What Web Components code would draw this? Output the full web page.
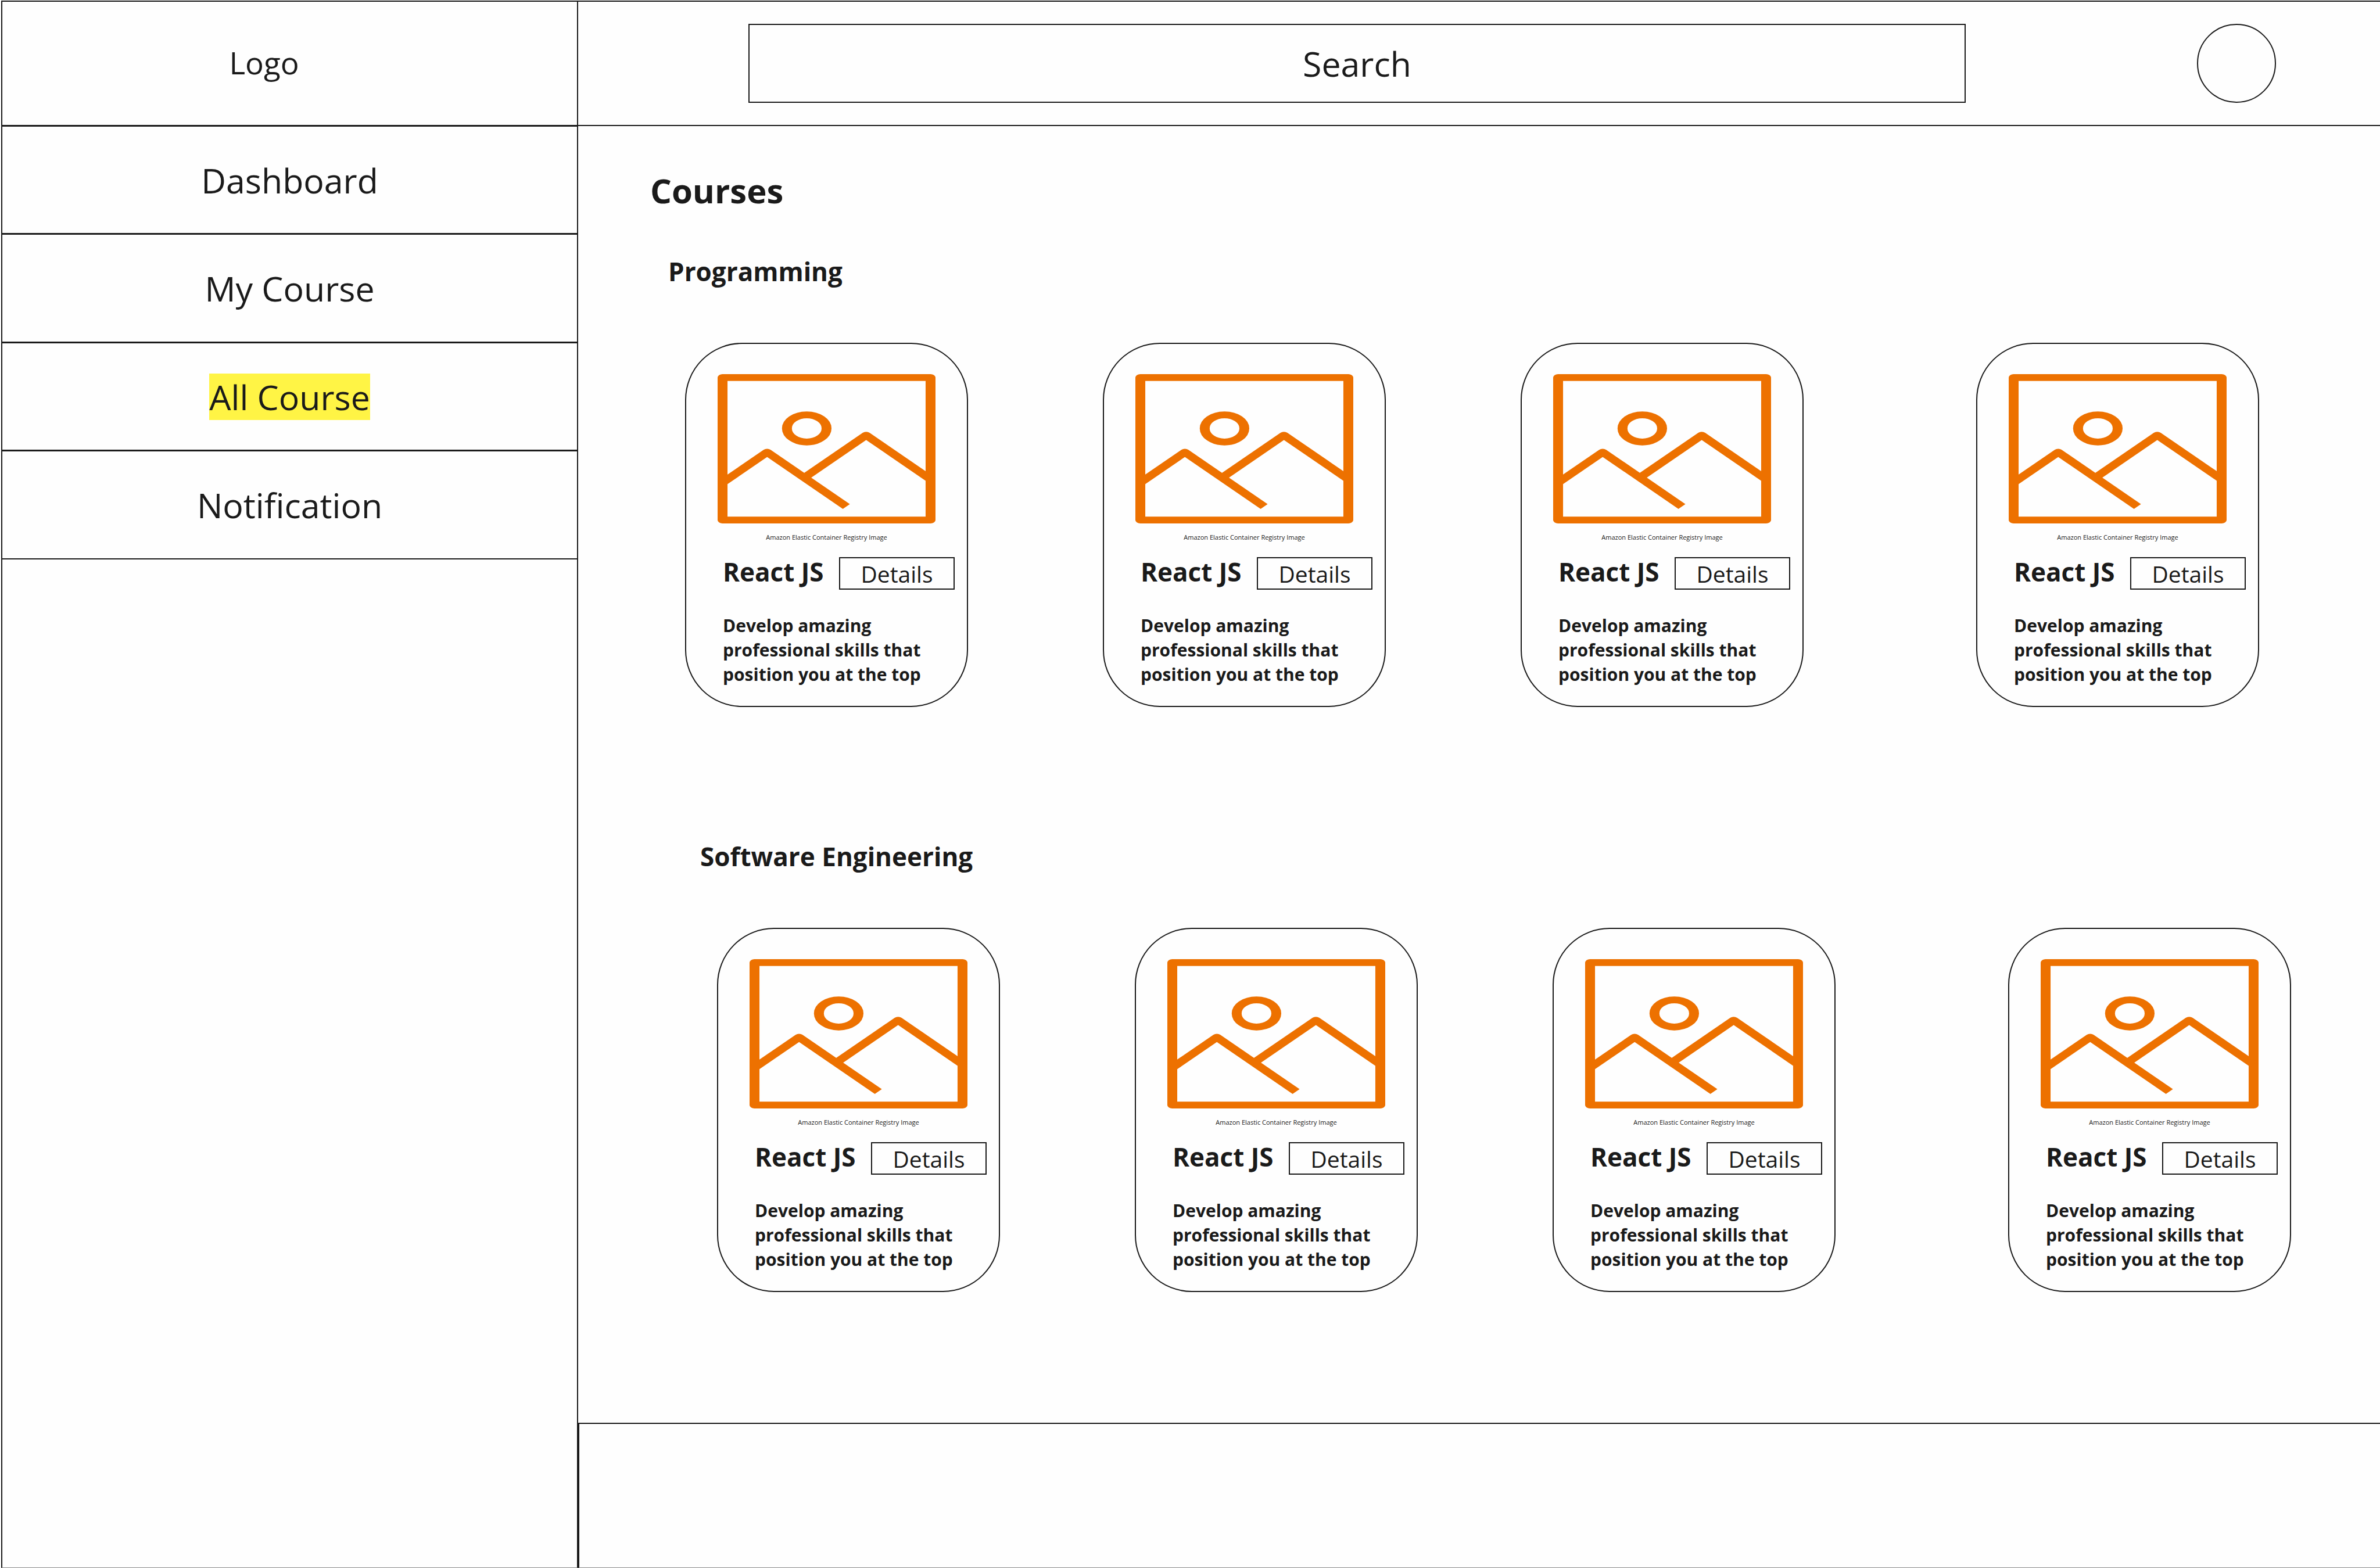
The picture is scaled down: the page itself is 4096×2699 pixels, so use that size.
<!DOCTYPE html>
<html lang="en">
<head>
<meta charset="utf-8">
<title>Courses</title>
<style>
  html { background: #fefefe; }
  body {
    margin: 0;
    font-family: "Open Sans", "Noto Sans", sans-serif;
    color: #1a1a1a;
    --line: #1a1a1a;
    --edge: #8a8a8a;
  }
</style>
</head>
<body>
<app-shell>
  <side-bar slot="side">
    <span slot="logo">Logo</span>
    <nav-item href="#dashboard">Dashboard</nav-item>
    <nav-item href="#my-course">My Course</nav-item>
    <nav-item href="#all-course" active>All Course</nav-item>
    <nav-item href="#notification">Notification</nav-item>
  </side-bar>
  <top-bar slot="top"></top-bar>
  <page-content>
    <span slot="title">Courses</span>
    <course-section>
      <span slot="title">Programming</span>
      <course-card></course-card>
      <course-card></course-card>
      <course-card></course-card>
      <course-card></course-card>
    </course-section>
    <course-section shifted>
      <span slot="title">Software Engineering</span>
      <course-card></course-card>
      <course-card></course-card>
      <course-card></course-card>
      <course-card></course-card>
    </course-section>
  </page-content>
  <page-footer slot="footer"></page-footer>
</app-shell>

<script>
  const define = (name, html) => {
    const template = document.createElement('template');
    template.innerHTML = '<style>*{box-sizing:border-box}:host{display:block;box-sizing:border-box}</style>' + html;
    customElements.define(name, class extends HTMLElement {
      constructor() {
        super();
        this.attachShadow({ mode: 'open' }).append(template.content.cloneNode(true));
      }
      connectedCallback() {
        const link = this.shadowRoot.querySelector('a');
        if (link) {
          link.href = this.getAttribute('href');
          if (this.hasAttribute('active')) link.setAttribute('aria-current', 'page');
        }
      }
    });
  };

  define('app-shell', `
    <style>
      :host { display: grid; grid-template-columns: 993px 1fr; min-height: 100vh; padding: 1px 0 0 2px; }
      .main { display: flex; flex-direction: column; min-width: 0; }
      main { flex: 1; }
    </style>
    <slot name="side"></slot>
    <div class="main">
      <slot name="top"></slot>
      <main><slot></slot></main>
      <slot name="footer"></slot>
    </div>`);

  define('side-bar', `
    <style>
      :host { border: 2px solid var(--line); border-bottom: 1px solid var(--edge); }
      .logo {
        display: flex; align-items: center; justify-content: center;
        height: 215px; padding: 0 88px 2px 0;
        border-bottom: 3px solid var(--line);
        font-size: 53px; line-height: 72px;
      }
      nav { display: grid; grid-auto-rows: 1fr; height: 745px; }
    </style>
    <div class="logo"><slot name="logo"></slot></div>
    <nav><slot></slot></nav>`);

  define('nav-item', `
    <style>
      :host { border-bottom: 3px solid var(--line); }
      :host(:last-child) { border-bottom-width: 2px; }
      a {
        display: flex; align-items: center; justify-content: center; height: 100%; padding-top: 1px;
        color: inherit; text-decoration: none; font-size: 59px; line-height: 80px;
      }
      :host([active]) span { background: #fff445; }
    </style>
    <a><span><slot></slot></span></a>`);

  define('top-bar', `
    <style>
      header {
        display: flex; align-items: center; gap: 398px;
        height: 216px; padding: 0 179px 0 293px;
        border: solid var(--line); border-width: 2px 0;
      }
      input {
        flex: 1; min-width: 0; height: 136px; padding: 0; border: 2px solid var(--line); border-radius: 0;
        background: none; outline: none; color: inherit;
        font: inherit; font-size: 59px; line-height: 80px; text-align: center;
      }
      input::placeholder { color: inherit; opacity: 1; }
      button {
        flex: none; width: 136px; height: 136px; padding: 0;
        border: 2px solid var(--line); border-radius: 50%; background: none;
      }
    </style>
    <header>
      <input type="text" aria-label="Search" placeholder="Search">
      <button type="button" aria-label="Profile"></button>
    </header>`);

  define('page-content', `
    <style>
      :host { padding: 71px 0 0 124px; }
      h1 { margin: 0; font-size: 58px; line-height: 80px; font-weight: 700; }
      .sections { display: grid; gap: 227px; padding-top: 69px; }
    </style>
    <h1><slot name="title"></slot></h1>
    <div class="sections"><slot></slot></div>`);

  define('course-section', `
    <style>
      :host { padding: 0 208px 0 31px; }
      :host([shifted]) { padding: 0 153px 0 86px; }
      h2 { margin: 0 0 93px; font-size: 44px; line-height: 60px; font-weight: 700; }
      .cards { display: grid; grid-template-columns: 719fr 719fr 784fr 487px; padding-left: 29px; }
    </style>
    <h2><slot name="title"></slot></h2>
    <div class="cards"><slot></slot></div>`);

  define('course-card', `
    <style>
      :host {
        width: 487px; height: 627px; padding-top: 52px;
        border: 2px solid var(--line); border-radius: 98px;
      }
      figure { margin: 0 54px; text-align: center; }
      svg { display: block; width: 375px; height: 257px; }
      figcaption { margin-top: 16px; font-size: 11px; line-height: 16px; }
      .row { display: flex; justify-content: space-between; align-items: flex-start; margin-top: 26px; padding: 0 21px 0 63px; }
      h3 { margin: 0; font-size: 44px; line-height: 50px; font-weight: 700; white-space: nowrap; }
      button {
        width: 199px; height: 56px; padding: 2px 0 0; border: 2px solid var(--line); background: none;
        color: inherit; font: inherit; font-size: 39px; line-height: 50px;
      }
      p { margin: 41px 0 0; padding: 0 56px 0 63px; font-size: 30px; line-height: 42px; font-weight: 700; }
    </style>
    <figure>
      <svg viewBox="0 0 44 44" preserveAspectRatio="none" fill="none" stroke="#ed7100" stroke-width="2" stroke-linejoin="round" aria-hidden="true">
        <rect x="1" y="1" width="42" height="42"/>
        <circle cx="18" cy="16" r="4"/>
        <path d="M1 32 10 23 26 39"/>
        <path d="M17.500 30.500 30 18 43 31"/>
      </svg>
      <figcaption>Amazon Elastic Container Registry Image</figcaption>
    </figure>
    <div class="row">
      <h3>React JS</h3>
      <button type="button">Details</button>
    </div>
    <p>Develop amazing professional skills that position you at the top</p>`);

  define('page-footer', `
    <style>
      footer { height: 250px; border: 2px solid var(--line); border-right: 0; border-bottom: 1px solid var(--edge); }
    </style>
    <footer></footer>`);
</script>
</body>
</html>
